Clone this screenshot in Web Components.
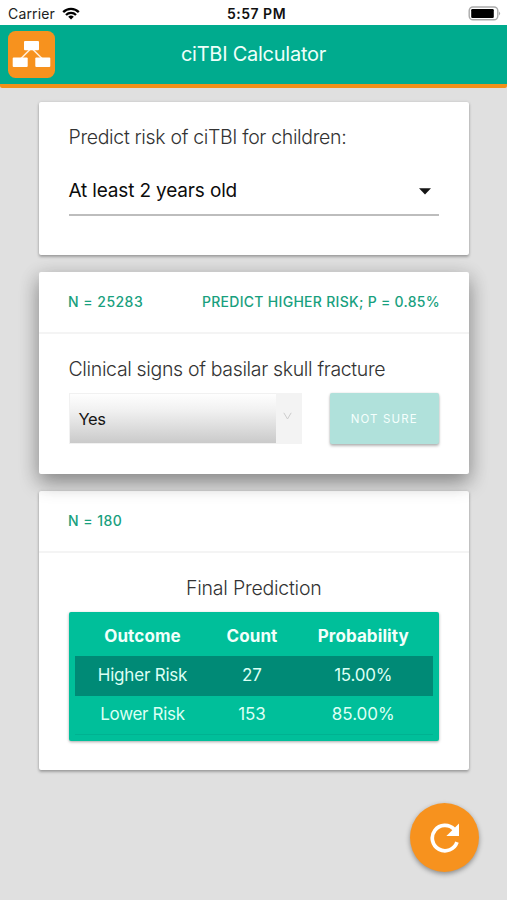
<!DOCTYPE html>
<html lang="en">
<head>
<meta charset="utf-8">
<title>ciTBI Calculator</title>
<style>
html,body{margin:0;height:100%}
body{background:#e0e0e0;font-family:Inter,"Liberation Sans",sans-serif;overflow:hidden}
</style>
</head>
<body>
<calc-app></calc-app>
<script>
function define(name, html) {
  const template = document.createElement('template');
  template.innerHTML = html;
  customElements.define(name, class extends HTMLElement {
    constructor() {
      super();
      this.attachShadow({ mode: 'open' }).append(template.content.cloneNode(true));
    }
  });
}

define('status-bar', `
<style>
:host{display:grid;grid-template-columns:1fr auto 1fr;align-items:center;height:25px;padding:2px 6px 0 8px;box-sizing:border-box;background:#fff;color:#111;font-size:14px;line-height:22px}
.left{display:flex;align-items:center;gap:7px;letter-spacing:.15px;color:#222}
.time{font-weight:600;letter-spacing:.5px;font-size:14px;white-space:nowrap;padding-left:4px}
.batt{justify-self:end;display:block}
svg{display:block}
</style>
<div class="left"><span>Carrier</span>
<svg width="18" height="13" viewBox="0 0 18 13" fill="none" stroke="#000" stroke-width="2.3"><path d="M1.2 5.1a11 11 0 0 1 15.6 0"/><path d="M4 8a7.1 7.1 0 0 1 10 0"/><path d="M9 12.5 6.2 9.8a4 4 0 0 1 5.6 0Z" fill="#000" stroke="none"/></svg></div>
<span class="time">5:57 PM</span>
<svg class="batt" width="33" height="15" viewBox="0 0 33 15"><rect x="1.2" y="1" width="28.6" height="12.8" rx="3.8" fill="#fff" stroke="#aaa" stroke-width="1.4"/><rect x="3.2" y="3" width="22.6" height="8.9" rx="1.2" fill="#000"/><path d="M31 5.4q2.2 2 0 4.2Z" fill="#aaa"/></svg>`);

define('app-header', `
<style>
:host{display:grid;grid-template-columns:48px 1fr 48px;align-items:center;height:63px;box-sizing:border-box;padding:0 8px;background:#00ab8e;border-bottom:4px solid #f39019;color:#effffa;border-bottom-left-radius:2px;border-bottom-right-radius:2px}
h1{margin:0;font-size:20px;font-weight:400;letter-spacing:-.25px;text-align:center;line-height:28px;padding-bottom:1px}
svg{display:block}
</style>
<svg width="47" height="47" viewBox="0 0 47 47"><rect width="47" height="47" rx="7.5" fill="#f7921e"/><path d="M22.5 18 12.5 28M24.5 18 34.5 28" stroke="#ffedd5" stroke-width="1.6"/><g fill="#fff"><rect x="16" y="10" width="15" height="9.3" rx="1"/><rect x="4.7" y="26.5" width="15" height="9.5" rx="1"/><rect x="27.3" y="26.5" width="15" height="9.5" rx="1"/></g></svg>
<h1><slot></slot></h1>`);

define('calc-card', `
<style>
:host{display:block;background:#fff;border-radius:2px;box-shadow:0 2px 3px rgba(0,0,0,.27),0 0 3px rgba(0,0,0,.13);box-sizing:border-box}
:host([active]){box-shadow:0 9px 20px rgba(0,0,0,.3),0 4px 20px rgba(0,0,0,.16);position:relative}
</style><slot></slot>`);

define('card-meta', `
<style>
:host{display:flex;justify-content:space-between;height:62px;box-sizing:border-box;padding:0 28.5px 0 29px;border-bottom:2px solid #f4f4f4;color:#18a07e;font-size:14px;font-weight:450;line-height:60px;letter-spacing:.47px;white-space:nowrap}
::slotted([slot=end]){letter-spacing:.29px}
</style><slot></slot><slot name="end"></slot>`);

define('card-label', `
<style>
:host{display:block;font-size:19.5px;font-weight:300;line-height:28px;letter-spacing:-.34px;color:#333;white-space:nowrap}
</style><slot></slot>`);

define('age-select', `
<style>
:host{display:flex;justify-content:space-between;align-items:center;height:49px;box-sizing:border-box;border-bottom:2px solid #bdbdbd;padding-right:8px;font-size:19px;letter-spacing:-.16px;color:#0c0c0c}
svg{display:block;margin-top:1px}
</style><slot></slot><svg width="12" height="7" viewBox="0 0 12 7"><path d="M0 .3H12L6 6.4Z" fill="#151515"/></svg>`);

define('answer-select', `
<style>
:host{display:flex;width:233px;height:51px;font-size:16.5px;letter-spacing:-.4px;color:#151515}
.value{flex:1;display:flex;align-items:center;padding-left:9px;border:1px solid #f1f1f1;border-width:1px 0 1px 1px;background:linear-gradient(#fefefe,#f0f0f0 35%,#cacaca)}
.arrow{width:26px;background:#f3f3f3;display:flex;justify-content:center;padding:19px 3px 0 0;box-sizing:border-box}
</style><div class="value"><slot></slot></div><div class="arrow"><svg width="9" height="9" viewBox="0 0 9 9" fill="none" stroke="#ccc"><path d="M.8.8 4.5 7 8.2.8"/></svg></div>`);

define('flat-button', `
<style>
:host{display:flex;width:109.5px;height:51px;border-radius:2px;background:#b0e1db;box-shadow:0 2px 3px rgba(0,0,0,.28),0 0 2px rgba(0,0,0,.14);align-items:center;justify-content:center;color:#f5fffd;font-size:11.5px;letter-spacing:1.15px;white-space:nowrap}
</style><slot></slot>`);

define('result-table', `
<style>
:host{display:block;height:129px;box-sizing:border-box;padding:6px 6.5px;background:#00bf9a;border-radius:2px;box-shadow:0 1px 3px rgba(0,0,0,.35);color:#dcfff4;font-size:17px;letter-spacing:-.2px}
.row{display:grid;grid-template-columns:135px 84px 1fr;text-align:center;line-height:37px}
.head{font-weight:700;letter-spacing:.1px;height:38px;color:#f2fffb}
.hot{background:#008a76;height:39.5px;line-height:39px}
.last{height:39px;box-sizing:border-box;line-height:37px;border-bottom:1px solid #00b291}
.num{letter-spacing:0}
.last span:first-child{letter-spacing:-.32px}
</style>
<div class="row head"><span>Outcome</span><span>Count</span><span>Probability</span></div>
<div class="row hot"><span>Higher Risk</span><span class="num">27</span><span>15.00%</span></div>
<div class="row last"><span>Lower Risk</span><span class="num">153</span><span class="num">85.00%</span></div>`);

define('reset-button', `
<style>
:host{position:fixed;left:410px;top:803px;width:69px;height:69px;border-radius:50%;background:#f7921e;box-shadow:0 2px 5px rgba(0,0,0,.38);display:flex;align-items:center;justify-content:center}
svg{display:block}
</style><svg width="30" height="30" viewBox="0 0 30 30"><path d="M27 19.2A12.7 12.7 0 1 1 24.2 6.3" fill="none" stroke="#fff" stroke-width="3.7"/><path d="M29 .6V13H16.4Z" fill="#fff"/></svg>`);

define('calc-app', `
<style>
:host{display:block}
main{display:flex;flex-direction:column;gap:17px;padding:14px 38.5px 0 39px}
.one{height:153px;padding:21px 30px 0 29.5px}
.one age-select{margin-top:16px}
.two{height:201.5px}
.three{height:279.5px}
.body{padding:21px 29.5px 0}
.controls{display:flex;justify-content:space-between;margin-top:10px}
.center{text-align:center;letter-spacing:-.22px}
result-table{margin-top:10.5px}
</style>
<status-bar></status-bar>
<app-header>ciTBI Calculator</app-header>
<main>
<calc-card class="one"><card-label>Predict risk of ciTBI for children:</card-label><age-select>At least 2 years old</age-select></calc-card>
<calc-card class="two" active><card-meta><span>N = 25283</span><span slot="end">PREDICT HIGHER RISK; P = 0.85%</span></card-meta>
<div class="body"><card-label>Clinical signs of basilar skull fracture</card-label><div class="controls"><answer-select>Yes</answer-select><flat-button>NOT SURE</flat-button></div></div></calc-card>
<calc-card class="three"><card-meta>N = 180</card-meta>
<div class="body"><card-label class="center">Final Prediction</card-label><result-table></result-table></div></calc-card>
</main>
<reset-button></reset-button>`);
</script>
</body>
</html>
